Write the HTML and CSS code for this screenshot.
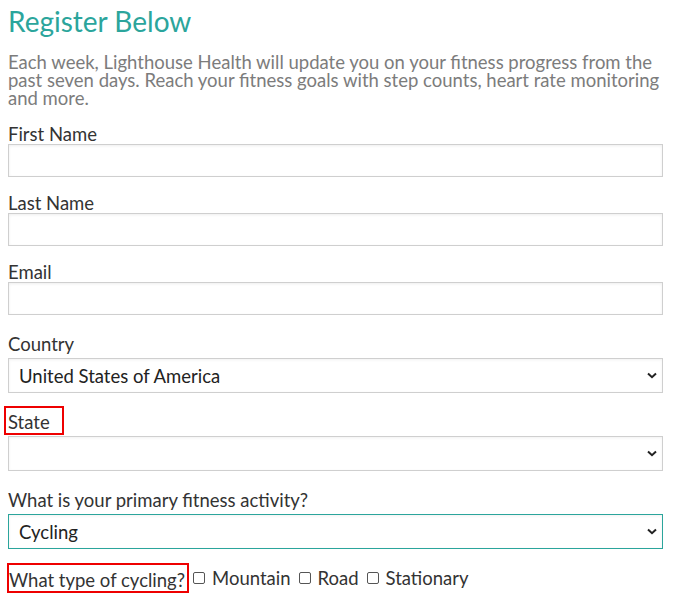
FILE: index.html
```html
<!DOCTYPE html>
<html>
<head>
<meta charset="utf-8">
<link rel="stylesheet" href="styles.css">
</head>
<body>
<div class="form">
  <h1 class="title">Register Below</h1>
  <p class="intro">Each week, Lighthouse Health will update you on your fitness progress from the past seven days. Reach your fitness goals with step counts, heart rate monitoring and more.</p>
  <div class="field">
    <label class="label">First Name</label>
    <input class="input" type="text">
  </div>
  <div class="field">
    <label class="label">Last Name</label>
    <input class="input" type="text">
  </div>
  <div class="field">
    <label class="label">Email</label>
    <input class="input" type="text">
  </div>
  <div class="field field-select">
    <label class="label">Country</label>
    <div class="select"><span>United States of America</span><svg class="chev" width="10" height="7" viewBox="0 0 10 7"><path d="M1 1.5 L5 5.2 L9 1.5" fill="none" stroke="#222" stroke-width="2"/></svg></div>
  </div>
  <div class="field field-select">
    <label class="label"><span class="flag state-flag">State</span></label>
    <div class="select"><span></span><svg class="chev" width="10" height="7" viewBox="0 0 10 7"><path d="M1 1.5 L5 5.2 L9 1.5" fill="none" stroke="#222" stroke-width="2"/></svg></div>
  </div>
  <div class="field field-select">
    <label class="label">What is your primary fitness activity?</label>
    <div class="select focus"><span>Cycling</span><svg class="chev" width="10" height="7" viewBox="0 0 10 7"><path d="M1 1.5 L5 5.2 L9 1.5" fill="none" stroke="#222" stroke-width="2"/></svg></div>
  </div>
  <div class="checks">
    <span class="flag cyc-flag">What type of cycling?</span>
    <label class="check first-check"><span class="box"></span>Mountain</label>
    <label class="check"><span class="box"></span>Road</label>
    <label class="check"><span class="box"></span>Stationary</label>
  </div>
</div>
</body>
</html>
```
FILE: styles.css
```css
html, body { margin: 0; padding: 0; background: #fff; }
body { padding: 8px; font-family: Lato, "Open Sans", sans-serif; color: #333; }
.form { width: 655px; }
.title { margin: 0; font-weight: 400; font-size: 28px; line-height: 26px; color: #2ba59c; }
.intro { margin: 19px 0 0; font-size: 18.5px; line-height: 18px; color: #7c7c7c; }
.field { margin-top: 17px; }
.intro + .field { margin-top: 18px; }
.label { display: block; font-size: 18.5px; line-height: 19px; color: #333; }
.input { display: block; box-sizing: border-box; width: 655px; height: 33px; border: 1px solid #cfcfcf; box-shadow: inset 0 1px 3px rgba(0,0,0,0.07); margin: 0; padding: 0; background: #fff; }
.field-select { margin-top: 20px; }
.select { box-sizing: border-box; height: 35px; margin-top: 4px; border: 1px solid #cfcfcf; box-shadow: inset 0 1px 3px rgba(0,0,0,0.06); display: flex; align-items: center; justify-content: space-between; padding: 0 5px 0 10px; font-size: 18.5px; color: #222; }
.select.focus { border-color: #2ba59c; }
.chev { display: block; }
.flag { border: 2px solid #e00; }
.state-flag { display: inline-block; padding: 5px 12px 1px 2px; margin: -7px 0 -3px -4px; line-height: 19px; vertical-align: top; }
.checks { margin-top: 14px; display: flex; align-items: center; font-size: 18.5px; color: #333; }
.cyc-flag { display: inline-block; padding: 5px 2px 1px 0; margin-left: -1px; line-height: 20px; }
.check { display: flex; align-items: center; margin-left: 8px; }
.first-check { margin-left: 4px; }
.box { width: 12px; height: 12px; border: 1px solid #555; border-radius: 2px; margin-right: 7px; box-sizing: border-box; }
```
